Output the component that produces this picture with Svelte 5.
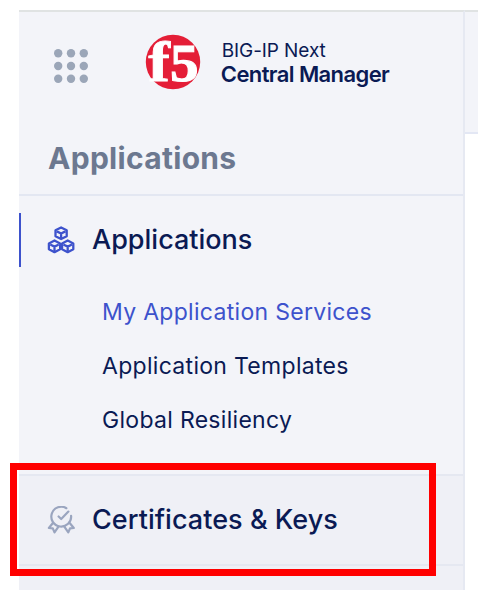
<script>
  const services = [
    { label: 'My Application Services', active: true },
    { label: 'Application Templates', active: false },
    { label: 'Global Resiliency', active: false }
  ];
  const dots = [4.2, 17, 29.8];
  const cubes = [[13.5, 6.9], [6.9, 20], [20.1, 20]];
</script>

<div class="page">
  <aside class="sidebar">
    <header class="brand">
      <svg class="launcher" width="34" height="34" viewBox="0 0 34 34" aria-label="Menu">
        {#each dots as y}
          {#each dots as x}
            <circle cx={x} cy={y} r="4.2" />
          {/each}
        {/each}
      </svg>
      <svg class="logo" width="56" height="56" viewBox="0 0 56 56" role="img" aria-label="f5">
        <circle cx="28" cy="28" r="27.2" fill="#e41e37" />
        <g fill="#fff" stroke="#fff" font-family="Liberation Serif, serif" font-weight="700">
          <text transform="translate(3.2 47.2) scale(1.16 1)" font-size="56" stroke-width=".8">f</text>
          <text transform="translate(25 47.4) scale(1.09 1)" font-size="52.5" stroke-width="1">5</text>
        </g>
      </svg>
      <div class="product">
        <span class="family">BIG-IP Next</span>
        <span class="name">Central Manager</span>
      </div>
    </header>

    <h1><span>Applications</span></h1>

    <nav>
      <section class="group">
        <div class="item current">
          <svg width="28" height="28" viewBox="0 0 28 28" fill="none" stroke="#3d52cc" stroke-width="2.3" stroke-linejoin="round" stroke-linecap="round">
            {#each cubes as [x, y]}
              <path transform="translate({x + 0.6} {y + 0.3})" d="M0-5.8 5.6-2.9V3L0 5.9-5.6 3V-2.9ZM-3.3-1.3 0 .3 3.3-1.3M0 .3V3.7" />
            {/each}
          </svg>
          <span class="label">Applications</span>
        </div>
        <ul>
          {#each services as service}
            <li class:active={service.active}><span>{service.label}</span></li>
          {/each}
        </ul>
      </section>
      <section class="certificates">
        <div class="item">
          <svg width="28" height="28" viewBox="0 0 28 28" fill="none" stroke="#9aa5bf" stroke-width="2.2" stroke-linejoin="round" stroke-linecap="round">
            <path d="M19.4 2.2A9.9 9.9 0 1 0 24.1 9.8M11.6 10.5 14.2 13 21.4 5.6" />
            <path d="M5.7 17.2 1.9 22 5.8 22.4 7.5 26.4 11.5 20.6M22.9 17.2 26.8 22 23 22.4 21.3 26.4 17.3 20.6" />
          </svg>
          <span class="label cert-label">Certificates &amp; Keys</span>
        </div>
      </section>
      <div class="rest"></div>
    </nav>
  </aside>
  <div class="content-header"></div>
  <div class="highlight"></div>
</div>

<style>
  :global(body) { background: #fff; }
  .page {
    position: relative;
    display: flex;
    align-items: flex-start;
    box-sizing: border-box;
    width: 478px;
    height: 602px;
    padding: 10px 0 12px 19px;
    overflow: hidden;
    color: #0a1a54;
    font-family: Inter, "Liberation Sans", sans-serif;
    white-space: nowrap;
  }
  .sidebar {
    box-sizing: border-box;
    width: 446px;
    height: 580px;
    border-top: 2px solid #e0e3e3;
    border-right: 2px solid #e6e9f2;
    background: #f3f4f9;
  }
  .content-header {
    box-sizing: border-box;
    width: 13px;
    height: 124px;
    border-top: 2px solid #e0e3e3;
    border-bottom: 2px solid #e3e7f4;
    background: #f3f4f9;
  }
  .brand { display: flex; height: 108px; }
  .launcher { margin: 37px 0 0 35.4px; fill: #9ba6b8; }
  .logo { margin: 22.4px 0 0 56.8px; overflow: visible; }
  .product { display: flex; flex-direction: column; margin: 27px 0 0 19.6px; }
  .family { padding-left: 1px; font-size: 19px; line-height: 23px; letter-spacing: -0.1px; }
  .name { font-size: 22px; line-height: 24px; font-weight: 600; letter-spacing: -0.6px; }
  h1 {
    box-sizing: border-box;
    height: 76px;
    margin: 0;
    padding: 20px 0 0 29px;
    border-bottom: 2px solid #e3e7f2;
    color: #6c7890;
    font-size: 30px;
    line-height: 36px;
    font-weight: 700;
    letter-spacing: 0.3px;
  }
  .group { box-sizing: border-box; height: 278px; padding-top: 17px; }
  .item {
    display: flex;
    align-items: center;
    box-sizing: border-box;
    height: 54px;
    padding-left: 28px;
    gap: 17px;
    font-size: 27px;
    font-weight: 500;
  }
  .label { padding-bottom: 2px; }
  .cert-label { letter-spacing: 0.04px; }
  .current { border-left: 2px solid #3d52cc; padding-left: 26px; }
  ul { margin: 18px 0 0; padding: 0; list-style: none; }
  li {
    height: 54px;
    padding-left: 83px;
    font-size: 23px;
    line-height: 54px;
    letter-spacing: 0.3px;
  }
  .active { color: #3d52cc; }
  .certificates {
    box-sizing: border-box;
    height: 90px;
    padding-top: 17px;
    border-top: 2px solid #e5e8f1;
    background: #eff0f6;
  }
  .rest { box-sizing: border-box; height: 26px; border-top: 2px solid #e5e8f1; background: #eff0f6; }
  .highlight {
    position: absolute;
    left: 10px;
    top: 463px;
    box-sizing: border-box;
    width: 426px;
    height: 113px;
    border: 7px solid #f00;
  }
</style>
